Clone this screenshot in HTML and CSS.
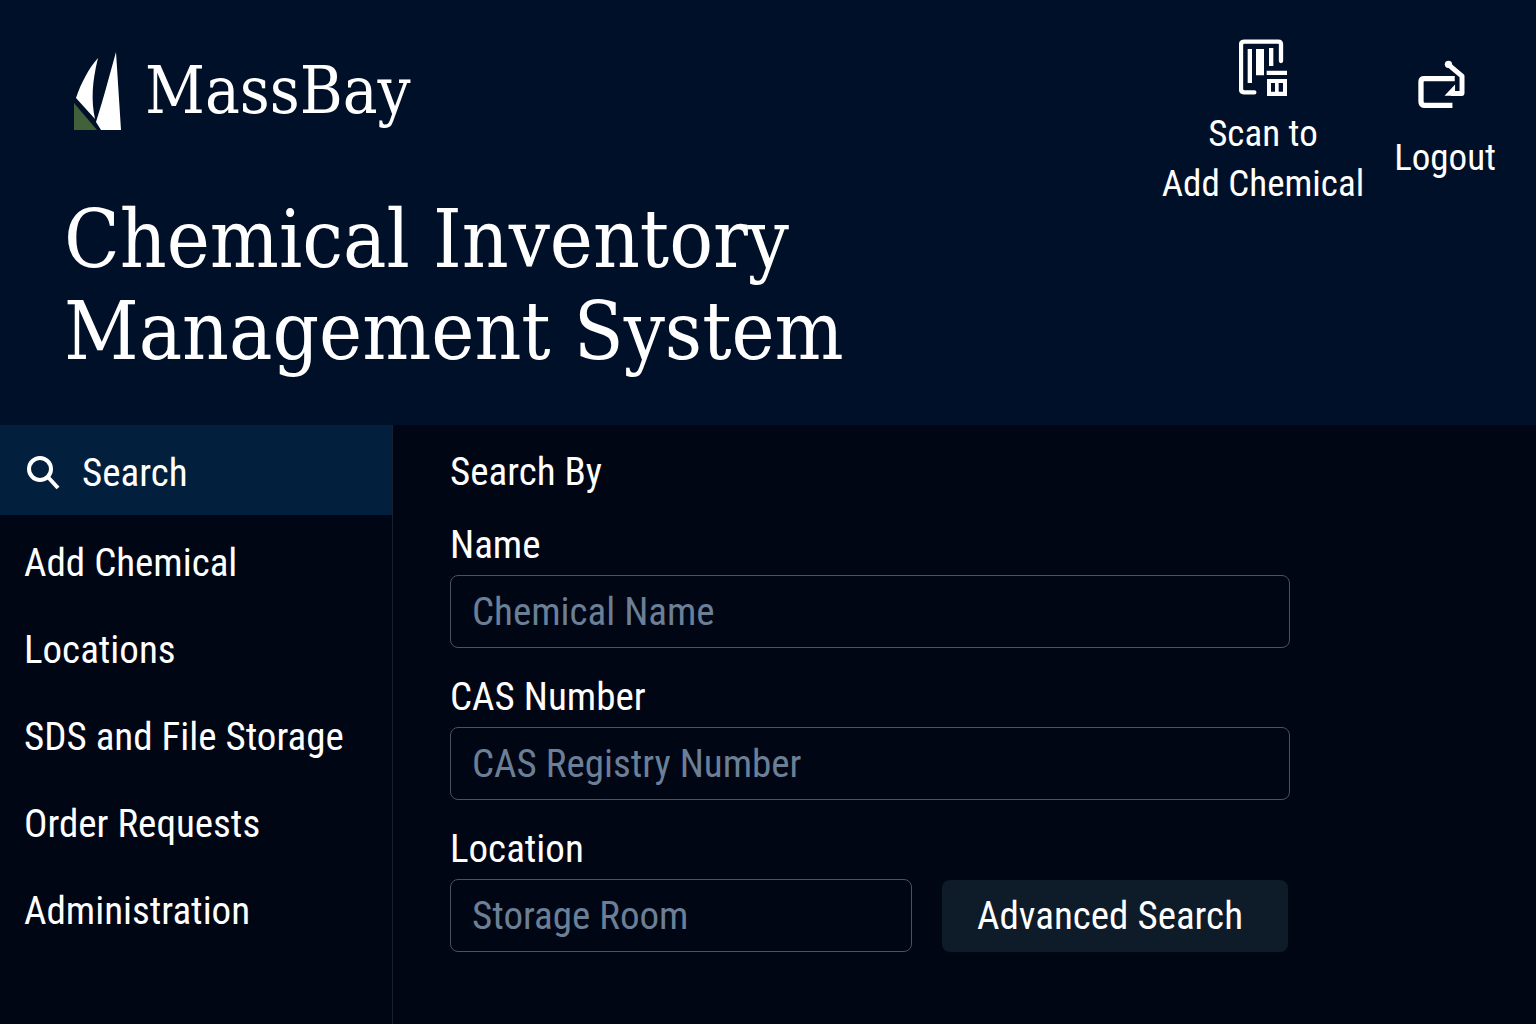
FILE: index.html
```html
<!DOCTYPE html>
<html lang="en">
<head>
<meta charset="utf-8">
<meta name="viewport" content="width=device-width, initial-scale=1">
<title>MassBay Chemical Inventory Management System</title>
<link rel="stylesheet" href="styles.css">
</head>
<body>
<header class="header">
  <div class="intro">
    <div class="brand">
      <svg class="brand-mark" viewBox="0 0 47 78" width="47" height="78" aria-hidden="true">
        <path fill="#fff" d="M24 6C15 16 7 31 2 46L21 67C17 49 18 30 24 6Z"/>
        <path fill="#fff" d="M42 0L47 78H27L22 70C30 45 35 25 42 0Z"/>
        <path fill="#41613a" d="M0 51V78H23Z"/>
      </svg>
      <span class="brand-name">MassBay</span>
    </div>
    <h1 class="title">Chemical Inventory<br>Management System</h1>
  </div>
  <div class="actions">
    <button type="button" class="action">
      <svg viewBox="51 27 144 174" width="48" height="58" aria-hidden="true">
        <path fill="none" stroke="#fff" stroke-width="13" stroke-linecap="round" stroke-linejoin="round" d="M177 93V43Q177 35 169 35H67Q57 35 57 45V177Q57 187 67 187H97"/>
        <path fill="#fff" d="M77 57h13v102H77zM102 57h24v79h-24zM141 54h13v54h-13zM134 122h61v13h-61z"/>
        <path fill="#fff" fill-rule="evenodd" d="M135 147h60v51h-60zM147 159v26h12v-26zM170 159v26h13v-26z"/>
      </svg>
      <span>Scan to<br>Add Chemical</span>
    </button>
    <button type="button" class="action action-logout">
      <svg viewBox="50 30 142 148" width="47" height="49" aria-hidden="true">
        <path fill="none" stroke="#fff" stroke-width="16" d="M161 86H69Q59 86 59 96V155Q59 167 71 167H154"/>
        <path fill="none" stroke="#fff" stroke-width="15" stroke-linejoin="round" d="M141 43L183 79V131H150"/>
        <circle cx="142" cy="43" r="11" fill="#fff"/>
        <path fill="#fff" d="M130 138L162 104V138Z"/>
      </svg>
      <span>Logout</span>
    </button>
  </div>
</header>
<div class="body">
  <nav class="sidebar" aria-label="Main">
    <a class="nav-item nav-active" href="#search" aria-current="page">
      <svg viewBox="0 0 34 34" width="34" height="34" aria-hidden="true">
        <circle cx="14" cy="13" r="11" fill="none" stroke="#fff" stroke-width="4"/>
        <path d="M21 20L32 32" stroke="#fff" stroke-width="4"/>
      </svg>
      Search
    </a>
    <a class="nav-item" href="#add">Add Chemical</a>
    <a class="nav-item" href="#locations">Locations</a>
    <a class="nav-item" href="#sds">SDS and File Storage</a>
    <a class="nav-item" href="#orders">Order Requests</a>
    <a class="nav-item" href="#admin">Administration</a>
  </nav>
  <main class="main">
    <form class="search-form">
      <h2 class="form-title">Search By</h2>
      <div class="field">
        <label for="name">Name</label>
        <input id="name" type="text" placeholder="Chemical Name">
      </div>
      <div class="field">
        <label for="cas">CAS Number</label>
        <input id="cas" type="text" placeholder="CAS Registry Number">
      </div>
      <div class="last-row">
        <div class="field field-location">
          <label for="location">Location</label>
          <input id="location" type="text" placeholder="Storage Room">
        </div>
        <button type="button" class="advanced">Advanced Search</button>
      </div>
    </form>
  </main>
</div>
</body>
</html>
```
FILE: styles.css
```css
* {
  box-sizing: border-box;
}

body {
  margin: 0;
  min-height: 100vh;
  display: flex;
  flex-direction: column;
  background: #000614;
  color: #fff;
  font-family: "Roboto Condensed", "Liberation Sans Narrow", Roboto, sans-serif;
  font-size: 39px;
  line-height: 50px;
}

button,
input {
  font: inherit;
  color: inherit;
}

.header {
  display: flex;
  justify-content: space-between;
  align-items: flex-start;
  padding: 39px 40px 48px 64px;
  background: #001028;
}

.intro {
  padding-top: 12px;
}

.brand {
  display: flex;
  align-items: center;
  gap: 24px;
  padding-left: 10px;
}

.brand-name,
.title {
  font-family: "DejaVu Serif Condensed", "DejaVu Serif", serif;
  font-weight: 400;
}

.brand-name {
  font-size: 65px;
  line-height: 80px;
}

.title {
  margin: 62px 0 0;
  font-size: 81px;
  line-height: 92px;
}

.actions {
  display: flex;
  gap: 30px;
  font-size: 37px;
}

.action {
  display: flex;
  flex-direction: column;
  align-items: center;
  gap: 12px;
  padding: 0;
  border: 0;
  background: none;
}

.action-logout {
  gap: 24px;
  padding-top: 21px;
}

.action-logout svg {
  margin-right: 8px;
}

.body {
  flex: 1;
  display: flex;
}

.sidebar {
  flex: 0 0 393px;
  border-right: 1px solid #17202c;
}

.nav-item {
  display: flex;
  align-items: center;
  gap: 22px;
  min-height: 87px;
  padding: 8px 24px 0;
  color: inherit;
  text-decoration: none;
}

.nav-active {
  min-height: 90px;
  padding: 6px 26px 0;
  background: #021f3d;
}

.main {
  flex: 1;
  padding: 23px 40px 40px 57px;
}

.search-form {
  display: flex;
  flex-direction: column;
  gap: 24px;
  max-width: 840px;
}

.form-title {
  margin: 0;
  font-size: inherit;
  font-weight: 400;
  line-height: 48px;
}

.field {
  display: flex;
  flex-direction: column;
  gap: 5px;
}

.field input {
  width: 100%;
  height: 73px;
  padding: 0 21px;
  border: 1px solid #4b525c;
  border-radius: 8px;
  background: transparent;
}

.field input::placeholder {
  color: #6b7f96;
  opacity: 1;
}

.last-row {
  display: flex;
  align-items: flex-end;
  gap: 30px;
  padding-right: 2px;
}

.field-location {
  flex: 1;
}

.advanced {
  width: 346px;
  height: 72px;
  padding: 0 10px 0 0;
  border: 0;
  border-radius: 8px;
  background: #0e1b29;
}
```
